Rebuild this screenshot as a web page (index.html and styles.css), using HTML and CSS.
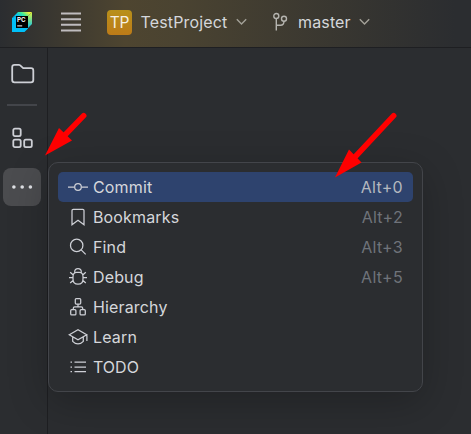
FILE: index.html
```html
<!DOCTYPE html>
<html lang="en">
<head>
<meta charset="utf-8">
<title>TestProject</title>
<link rel="stylesheet" href="styles.css">
</head>
<body>
<div class="ide">
  <header class="toolbar">
    <svg class="logo" width="20" height="20" viewBox="0 0 20 20">
      <defs>
        <linearGradient id="lg" x1="0" y1="0.6" x2="1" y2="0.2">
          <stop offset="0.25" stop-color="#07c3f2"/><stop offset="0.55" stop-color="#3bea9a"/><stop offset="0.9" stop-color="#f2f23c"/>
        </linearGradient>
        <linearGradient id="side" x1="0" y1="1" x2="0" y2="0">
          <stop offset="0.1" stop-color="#07c3f2"/><stop offset="0.9" stop-color="#c8ee4a"/>
        </linearGradient>
      </defs>
      <path d="M6 0H20L16 4H4L0 6Z" fill="url(#lg)"/>
      <path d="M20 0V12L14 18L16 4Z" fill="url(#side)"/>
      <path d="M0 6L4 4V16H16V16.5L12.5 20H0Z" fill="#00c0f8"/>
      <rect x="4" y="4" width="12" height="12" fill="#000"/>
      <text class="logo-text" x="4.9" y="9.9">PC</text>
      <rect x="5.2" y="13.4" width="5" height="1" fill="#fff"/>
    </svg>
    <svg class="hamburger" width="20" height="20" viewBox="0 0 20 20"><path d="M0 1.5H20M0 7.2H20M0 12.8H20M0 18.5H20"/></svg>
    <span class="badge">TP</span>
    <span class="project">TestProject</span>
    <svg class="chevron" width="11" height="8" viewBox="0 0 11 8"><path d="M.8 1.2L5.5 6L10.2 1.2"/></svg>
    <svg class="branch" width="16" height="20" viewBox="0 0 16 20"><circle cx="4.3" cy="4" r="2.5"/><circle cx="12" cy="6.7" r="2.5"/><path d="M4.3 6.5V18.5M4.3 13.2H8.5Q12 13.2 12 9.2"/></svg>
    <span class="branch-name">master</span>
    <svg class="chevron" width="11" height="8" viewBox="0 0 11 8"><path d="M.8 1.2L5.5 6L10.2 1.2"/></svg>
  </header>
  <div class="body">
    <nav class="stripe">
      <svg class="tool folder" width="24" height="22" viewBox="0 0 24 22"><path d="M1.2 4.2Q1.2 1.9 3.5 1.9H7.9Q8.6 1.9 9.2 2.4L12.2 5.1H20Q22.3 5.1 22.3 7.4V17Q22.3 19.3 20 19.3H3.5Q1.2 19.3 1.2 17Z"/></svg>
      <div class="separator"></div>
      <svg class="tool structure" width="22" height="22" viewBox="0 0 22 22"><rect x="2.3" y="1.6" width="7.4" height="7.6" rx="1.6"/><rect x="2.3" y="12.6" width="7.4" height="7.6" rx="1.6"/><rect x="13.2" y="12.6" width="7.6" height="7.6" rx="1.6"/></svg>
      <div class="more"><svg width="22" height="6" viewBox="0 0 22 6"><circle cx="2.9" cy="3" r="1.8"/><circle cx="11.2" cy="3" r="1.8"/><circle cx="19.4" cy="3" r="1.8"/></svg></div>
    </nav>
    <main class="editor"></main>
  </div>
  <div class="popup">
    <div class="item selected"><svg viewBox="0 0 20 20"><circle cx="10" cy="10" r="3.3"/><path d="M0 10H6.5M13.5 10H20"/></svg><span>Commit</span><kbd>Alt+0</kbd></div>
    <div class="item"><svg viewBox="0 0 20 20"><path d="M4 3.6Q4 2.3 5.3 2.3H14.7Q16 2.3 16 3.6V17.8L10 13.3L4 17.8Z"/></svg><span>Bookmarks</span><kbd>Alt+2</kbd></div>
    <div class="item"><svg viewBox="0 0 20 20"><circle cx="8.7" cy="8.4" r="6.2"/><path d="M13.2 12.9L17.7 17.4"/></svg><span>Find</span><kbd>Alt+3</kbd></div>
    <div class="item"><svg viewBox="0 0 20 20"><path d="M6.7 5.4V5Q6.7 1.7 10 1.7T13.3 5V5.4M8.5 5.4H11.5Q15 5.8 15 9.5V12Q15 17.2 10 17.2T5 12V9.5Q5 5.8 8.5 5.4ZM5.3 8L2.2 5.2M14.7 8L17.8 5.2M1 10.6H5M15 10.6H19M5.3 13.3L2.2 16M14.7 13.3L17.8 16"/></svg><span>Debug</span><kbd>Alt+5</kbd></div>
    <div class="item"><svg viewBox="0 0 20 20"><rect x="7.3" y="1.6" width="5.4" height="5.4" rx="1"/><rect x="2.7" y="12.7" width="5.2" height="5.2" rx="1"/><rect x="12.1" y="12.7" width="5.2" height="5.2" rx="1"/><path d="M10 7V9.8M5.3 12.7V11.2Q5.3 9.8 6.7 9.8H13.3Q14.7 9.8 14.7 11.2V12.7"/></svg><span>Hierarchy</span></div>
    <div class="item"><svg viewBox="0 0 20 20"><path d="M1.3 7.7L10 2.8L18.7 7.7L10 12.7ZM4.7 10V14.3Q7 16.9 10 16.9T15.3 14.3V10M18.9 7.7V14"/></svg><span>Learn</span></div>
    <div class="item"><svg viewBox="0 0 20 20"><path d="M6.5 5.2H18M6.5 10H18M6.5 14.6H18M2.5 5.2H4M2.5 10H4M2.5 14.6H4"/></svg><span class="caps">TODO</span></div>
  </div>
  <svg class="arrows" width="471" height="434" viewBox="0 0 471 434">
    <path class="shaft" d="M83.7 115.7L64 136M393.7 115.7L355 157"/>
    <path class="head" d="M45 155.5L59 128L72 140.5ZM335 177.5L349 149.5L361.5 162.5Z"/>
  </svg>
</div>
</body>
</html>
```
FILE: styles.css
```css
* { box-sizing: border-box; }
body {
  margin: 0;
  background: #2b2d30;
  color: #d5d7db;
  font: 16px/30px Inter, "Liberation Sans", sans-serif;
  letter-spacing: .15px;
}
svg { display: block; flex: none; fill: none; stroke: #ced0d6; }
.ide {
  position: relative;
  display: flex;
  flex-direction: column;
  width: 471px;
  height: 434px;
  overflow: hidden;
}
.toolbar {
  display: flex;
  align-items: center;
  height: 48px;
  padding: 0 0 3px 12px;
  border-bottom: 1px solid #1e1f22;
  background: linear-gradient(90deg, #2b2d30 0, #4e4530 125px, #4a4331 180px, #2b2d30 455px);
}
.logo { stroke: none; }
.logo-text { font: 700 6.2px Inter, sans-serif; letter-spacing: 0; fill: #fff; }
.hamburger { margin-left: 29px; stroke: #bfbcbe; stroke-width: 2; }
.badge {
  width: 25px;
  height: 25px;
  margin-left: 26px;
  border-radius: 4px;
  background: linear-gradient(#b8901a, #bd7b18);
  color: #f5efe2;
  font-size: 15.5px;
  line-height: 26px;
  text-align: center;
  letter-spacing: -.1px;
}
.project { width: 95.5px; margin-left: 8.5px; }
.chevron { stroke: #a3a198; stroke-width: 1.4; }
.branch { margin-left: 25px; stroke: #b5b4af; stroke-width: 1.4; }
.branch-name { width: 61px; margin-left: 10px; }
.body { display: flex; flex: 1; }
.stripe {
  display: flex;
  flex-direction: column;
  align-items: flex-start;
  width: 48px;
  padding-top: 15px;
  border-right: 1px solid #1e1f22;
}
.tool { stroke-width: 1.8; }
.folder { margin-left: 11px; }
.separator { width: 30px; height: 2px; margin: 19px 0 0 7px; background: #43454a; }
.structure { margin: 21px 0 0 11px; }
.more {
  display: grid;
  place-items: center;
  width: 38px;
  height: 38px;
  margin: 19px 0 0 3px;
  border-radius: 8px;
  background: #4b4c4f;
}
.more svg { fill: #dfe1e5; stroke: none; }
.editor { flex: 1; }
.popup {
  position: absolute;
  left: 48px;
  top: 162px;
  width: 375px;
  height: 230px;
  padding: 9px;
  border: 1px solid #43454a;
  border-radius: 10px;
  background: #2b2d30;
  box-shadow: 0 10px 40px rgba(0, 0, 0, .24);
}
.item {
  display: flex;
  align-items: center;
  height: 30px;
  padding: 0 10px;
  border-radius: 5px;
}
.item svg { width: 20px; height: 20px; stroke-width: 1.25; }
.item span { margin-left: 5px; }
.item .caps { letter-spacing: 0; }
.item kbd { margin-left: auto; color: #6f737a; font: inherit; letter-spacing: .3px; }
.selected { background: #2e436e; }
.selected kbd { color: #b4b8bf; }
.arrows { position: absolute; left: 0; top: 0; }
.shaft { stroke: #f00; stroke-width: 5.5; stroke-linecap: round; }
.head { fill: #f00; stroke: none; }
```
